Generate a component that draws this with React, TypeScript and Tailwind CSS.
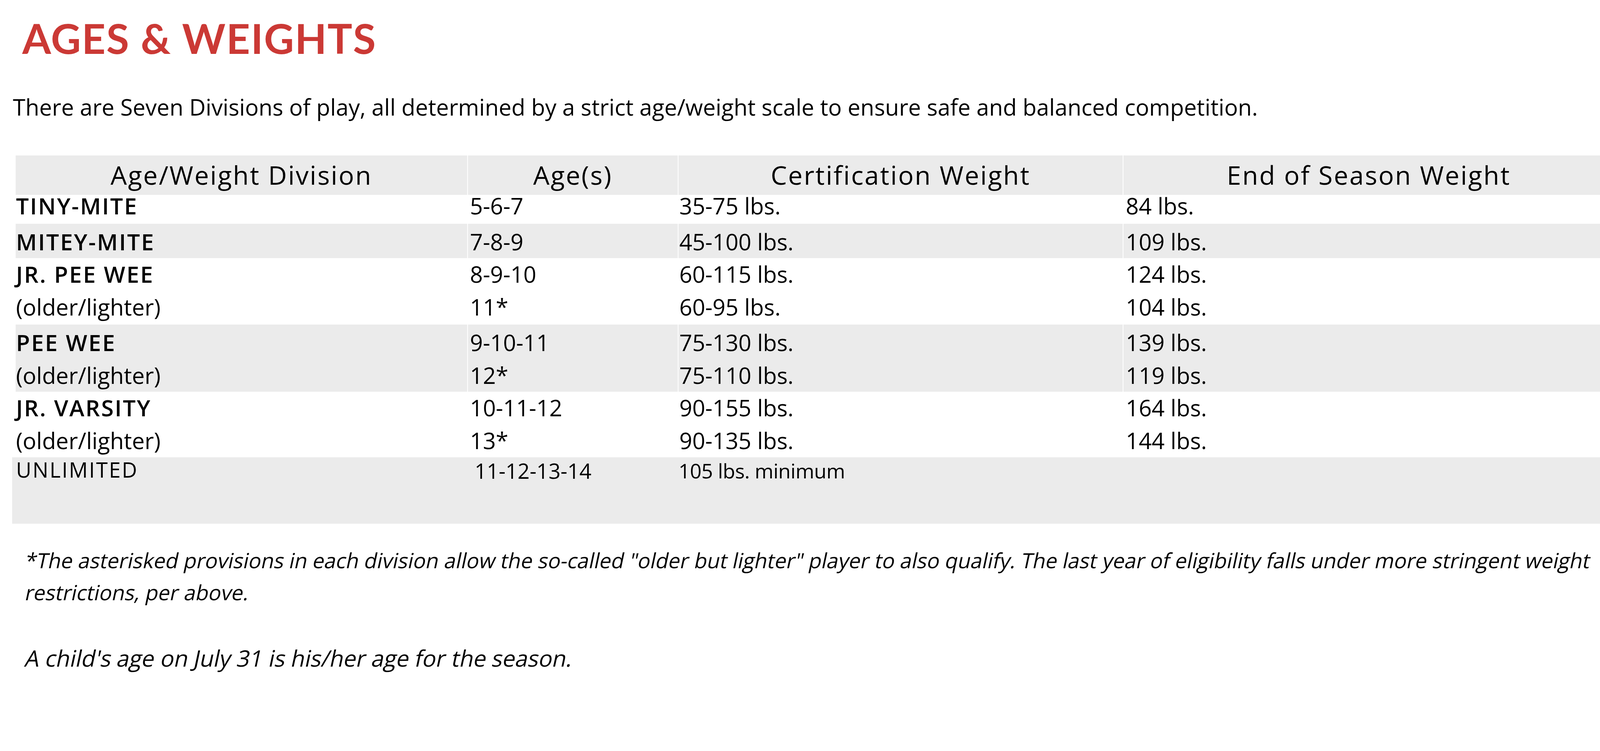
import { Fragment } from "react";

const headers = ["Age/Weight Division", "Age(s)", "Certification Weight", "End of Season Weight"];

type Line = { name: string; bold: boolean; age: string; cert: string; end: string };
type Group = { gray: boolean; h: string; lines: Line[] };

const groups: Group[] = [
  { gray: false, h: "h-[92px]", lines: [{ name: "TINY-MITE", bold: true, age: "5-6-7", cert: "35-75 lbs.", end: "84 lbs." }] },
  { gray: true, h: "h-[83px]", lines: [{ name: "MITEY-MITE", bold: true, age: "7-8-9", cert: "45-100 lbs.", end: "109 lbs." }] },
  {
    gray: false,
    h: "h-[175px]",
    lines: [
      { name: "JR. PEE WEE", bold: true, age: "8-9-10", cert: "60-115 lbs.", end: "124 lbs." },
      { name: "(older/lighter)", bold: false, age: "11*", cert: "60-95 lbs.", end: "104 lbs." },
    ],
  },
  {
    gray: true,
    h: "h-[167px]",
    lines: [
      { name: "PEE WEE", bold: true, age: "9-10-11", cert: "75-130 lbs.", end: "139 lbs." },
      { name: "(older/lighter)", bold: false, age: "12*", cert: "75-110 lbs.", end: "119 lbs." },
    ],
  },
  {
    gray: false,
    h: "h-[173px]",
    lines: [
      { name: "JR. VARSITY", bold: true, age: "10-11-12", cert: "90-155 lbs.", end: "164 lbs." },
      { name: "(older/lighter)", bold: false, age: "13*", cert: "90-135 lbs.", end: "144 lbs." },
    ],
  },
];

const cols = "grid grid-cols-[1156px_537px_1137px_1256px] gap-x-[2px]";

function Row({ group }: { group: Group }) {
  const bg = group.gray ? "bg-[#ebebeb]" : "";
  const cell = `${bg} pt-[4px] text-[58px] leading-[84px]`;
  return (
    <div className={`${cols} ${group.h}`}>
      <div className={`${cell} pl-[1px]`}>
        {group.lines.map((l) => (
          <div key={l.name + l.age} className={l.bold ? "font-semibold tracking-[3px]" : ""}>
            {l.name}
          </div>
        ))}
      </div>
      <div className={`${cell} pl-[5px]`}>
        {group.lines.map((l) => (
          <div key={l.age}>{l.age}</div>
        ))}
      </div>
      <div className={`${cell} pl-[2px]`}>
        {group.lines.map((l) => (
          <div key={l.cert}>{l.cert}</div>
        ))}
      </div>
      <div className={`${cell} pl-[6px]`}>
        {group.lines.map((l) => (
          <div key={l.end}>{l.end}</div>
        ))}
      </div>
    </div>
  );
}

// the original footnotes are a slanted upright face (wider than the real italic),
// so each word is skewed on its own and the text still wraps normally
function Slanted({ text }: { text: string }) {
  const words = text.split(" ");
  return (
    <>
      {words.map((w, i) => (
        <Fragment key={i}>
          <span className="inline-block -skew-x-12">{w}</span>
          {i < words.length - 1 ? " " : null}
        </Fragment>
      ))}
    </>
  );
}

export default function App() {
  return (
    <div className="min-h-screen w-full bg-white text-black font-['Open_Sans',sans-serif]">
      <h1 className="pl-[57px] pt-[34px] font-['Lato',sans-serif] text-[106px] font-bold leading-[127px] tracking-[2px] text-[#cb3935]">
        AGES &amp; WEIGHTS
      </h1>

      <p className="mt-[73px] pl-[33px] text-[58px] leading-[80px]">
        There are Seven Divisions of play, all determined by a strict age/weight scale to ensure safe and balanced
        competition.
      </p>

      <div className="mt-[84px]">
        <div className="pl-[40px]">
          <div className={`${cols} h-[83px]`}>
            {headers.map((h) => (
              <div
                key={h}
                className="flex items-center justify-center bg-[#ebebeb] pb-[2px] text-[66px] tracking-[3px]"
              >
                {h}
              </div>
            ))}
          </div>
          {groups.map((g, i) => (
            <Row key={i} group={g} />
          ))}
        </div>
        <div className="ml-[31px] grid h-[170px] w-[4101px] grid-cols-[1184px_522px_1fr] bg-[#ebebeb]">
          <div className="pl-[10px] pt-[1px] text-[54px] leading-[60px] tracking-[3px]">UNLIMITED</div>
          <div className="pt-[4px] text-[54px] leading-[60px]">11-12-13-14</div>
          <div className="pt-[4px] text-[52px] leading-[60px] tracking-[-0.5px]">105 lbs. minimum</div>
        </div>
      </div>

      <div className="mt-[53px] w-[4140px] pl-[66px] leading-[82px]">
        <p className="text-[53.5px]">
          <Slanted text={`*The asterisked provisions in each division allow the so-called "older but lighter" player to also qualify. The last year of eligibility falls under more stringent weight restrictions, per above.`} />
        </p>
        <p className="mt-[86px] text-[58px]">
          <Slanted text="A child's age on July 31 is his/her age for the season." />
        </p>
      </div>
    </div>
  );
}
